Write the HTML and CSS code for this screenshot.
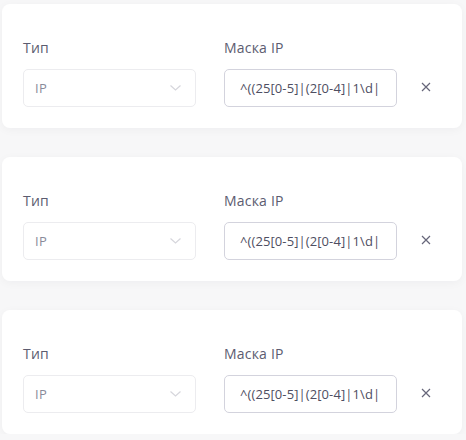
FILE: index.html
```html
<!DOCTYPE html>
<html lang="ru">
<head>
<meta charset="utf-8">
<link rel="stylesheet" href="styles.css">
</head>
<body>
<div class="list">
  <div class="card">
    <div class="field">
      <div class="label">Тип</div>
      <div class="select"><span class="value">IP</span>
        <svg class="chev" width="11" height="6" viewBox="0 0 11 6"><path d="M0.5 0.5 L5.5 5 L10.5 0.5" fill="none" stroke="#d6d6dc" stroke-width="1.2"/></svg>
      </div>
    </div>
    <div class="field">
      <div class="label">Маска IP</div>
      <div class="input"><span class="text">^((25[0-5]|(2[0-4]|1\d|</span></div>
    </div>
    <button class="close"><svg width="10" height="10" viewBox="0 0 10 10"><path d="M1 1 L9 9 M9 1 L1 9" stroke="#66667a" stroke-width="1.2" fill="none"/></svg></button>
  </div>
  <div class="card">
    <div class="field">
      <div class="label">Тип</div>
      <div class="select"><span class="value">IP</span>
        <svg class="chev" width="11" height="6" viewBox="0 0 11 6"><path d="M0.5 0.5 L5.5 5 L10.5 0.5" fill="none" stroke="#d6d6dc" stroke-width="1.2"/></svg>
      </div>
    </div>
    <div class="field">
      <div class="label">Маска IP</div>
      <div class="input"><span class="text">^((25[0-5]|(2[0-4]|1\d|</span></div>
    </div>
    <button class="close"><svg width="10" height="10" viewBox="0 0 10 10"><path d="M1 1 L9 9 M9 1 L1 9" stroke="#66667a" stroke-width="1.2" fill="none"/></svg></button>
  </div>
  <div class="card">
    <div class="field">
      <div class="label">Тип</div>
      <div class="select"><span class="value">IP</span>
        <svg class="chev" width="11" height="6" viewBox="0 0 11 6"><path d="M0.5 0.5 L5.5 5 L10.5 0.5" fill="none" stroke="#d6d6dc" stroke-width="1.2"/></svg>
      </div>
    </div>
    <div class="field">
      <div class="label">Маска IP</div>
      <div class="input"><span class="text">^((25[0-5]|(2[0-4]|1\d|</span></div>
    </div>
    <button class="close"><svg width="10" height="10" viewBox="0 0 10 10"><path d="M1 1 L9 9 M9 1 L1 9" stroke="#66667a" stroke-width="1.2" fill="none"/></svg></button>
  </div>
</div>
</body>
</html>
```
FILE: styles.css
```css
html, body {
  margin: 0;
  padding: 0;
  background: #f7f7f8;
  font-family: "Open Sans", "Liberation Sans", sans-serif;
}
.list {
  padding: 4px 4px 0 2px;
  display: flex;
  flex-direction: column;
  gap: 29px;
}
.card {
  background: #ffffff;
  border-radius: 8px;
  box-shadow: 0 2px 10px rgba(20, 20, 40, 0.04);
  height: 124px;
  box-sizing: border-box;
  padding: 35px 0 0 21px;
  display: flex;
  align-items: flex-start;
  gap: 28px;
}
.field {
  width: 173px;
  display: flex;
  flex-direction: column;
}
.label {
  font-size: 14px;
  line-height: 17px;
  color: #5c5c70;
  margin-bottom: 13px;
  letter-spacing: 0.2px;
}
.select, .input {
  height: 38px;
  box-sizing: border-box;
  border-radius: 5px;
  display: flex;
  align-items: center;
  font-size: 13px;
  overflow: hidden;
  white-space: nowrap;
}
.select {
  border: 1px solid #ececef;
  padding: 0 14px 0 11px;
  justify-content: space-between;
}
.value {
  color: #8a8a9a;
  letter-spacing: 0.3px;
}
.input {
  border: 1px solid #d3d3dd;
  padding: 0 0 0 15px;
}
.text {
  color: #4e4e62;
  letter-spacing: 0.1px;
}
.close {
  border: 0;
  background: transparent;
  padding: 0;
  margin: 43px 0 0 -4px;
  width: 10px;
  height: 10px;
  display: flex;
  cursor: pointer;
}
```
